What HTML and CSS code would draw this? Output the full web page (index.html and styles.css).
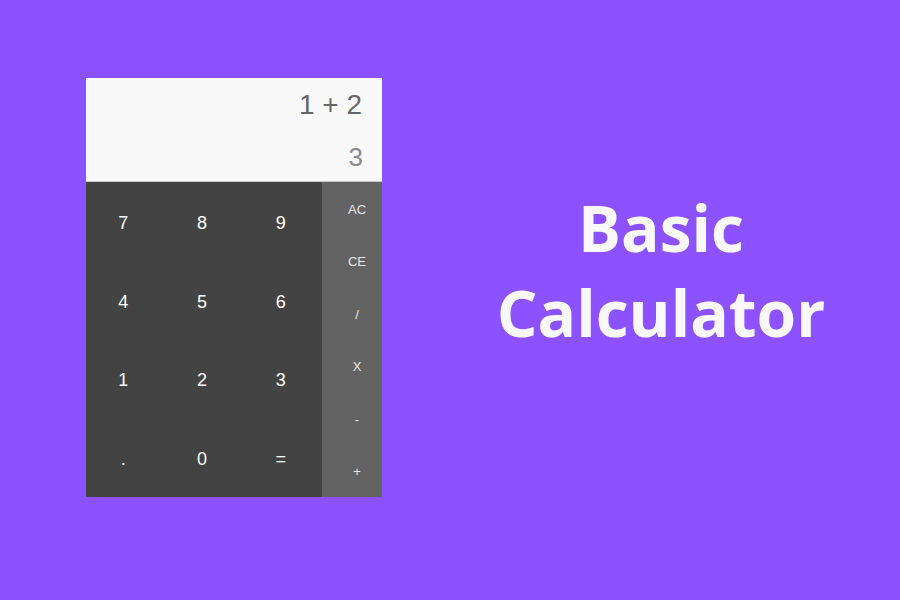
FILE: index.html
```html
<!DOCTYPE html>
<html>
<head>
<meta charset="utf-8">
<link rel="stylesheet" href="styles.css">
</head>
<body>
<div class="page">
  <div class="calc">
    <div class="display">
      <div class="expr">1 + 2</div>
      <div class="result">3</div>
    </div>
    <div class="pad">
      <div class="nums">
        <div class="key">7</div><div class="key">8</div><div class="key">9</div>
        <div class="key">4</div><div class="key">5</div><div class="key">6</div>
        <div class="key">1</div><div class="key">2</div><div class="key">3</div>
        <div class="key">.</div><div class="key">0</div><div class="key">=</div>
      </div>
      <div class="ops">
        <div class="op">AC</div>
        <div class="op">CE</div>
        <div class="op">/</div>
        <div class="op">X</div>
        <div class="op">-</div>
        <div class="op">+</div>
      </div>
    </div>
  </div>
  <div class="title">
    <h1>Basic<br>Calculator</h1>
  </div>
</div>
</body>
</html>
```
FILE: styles.css
```css
html, body {
  margin: 0;
  padding: 0;
}
body {
  background: #8c52ff;
  width: 900px;
  height: 600px;
  overflow: hidden;
}
.page {
  display: flex;
  align-items: flex-start;
  padding: 78px 0 0 86px;
}
.calc {
  width: 296px;
  display: flex;
  flex-direction: column;
  font-family: "Liberation Sans", Arial, sans-serif;
}
.display {
  height: 103px;
  background: #f9f9f9;
  border-bottom: 1px solid #c8c8c8;
  display: flex;
  flex-direction: column;
  align-items: flex-end;
  padding-right: 20px;
  box-sizing: content-box;
}
.expr {
  font-size: 28px;
  color: #666;
  margin-top: 10px;
  line-height: 34px;
}
.result {
  font-size: 26px;
  color: #8a8a8a;
  margin-top: 20px;
  line-height: 30px;
  margin-right: -1px;
}
.pad {
  display: flex;
  height: 315px;
}
.nums {
  width: 236px;
  background: #434343;
  display: grid;
  grid-template-columns: repeat(3, 1fr);
  grid-template-rows: repeat(4, 1fr);
}
.key {
  display: flex;
  align-items: center;
  justify-content: center;
  color: #fff;
  font-size: 18px;
  padding: 4px 4px 0 0;
}
.ops {
  width: 60px;
  background: #636363;
  display: grid;
  grid-template-rows: repeat(6, 1fr);
}
.op {
  display: flex;
  align-items: center;
  justify-content: center;
  color: #e8e8e8;
  font-size: 13px;
  padding: 2px 0 0 10px;
}
.title {
  flex: 1;
  padding-left: 40px;
  text-align: center;
}
.title h1 {
  margin: 107px 0 0 0;
  font-family: "Open Sans", sans-serif;
  font-weight: 700;
  font-size: 64px;
  line-height: 85px;
  color: #f8f8f8;
}
```
